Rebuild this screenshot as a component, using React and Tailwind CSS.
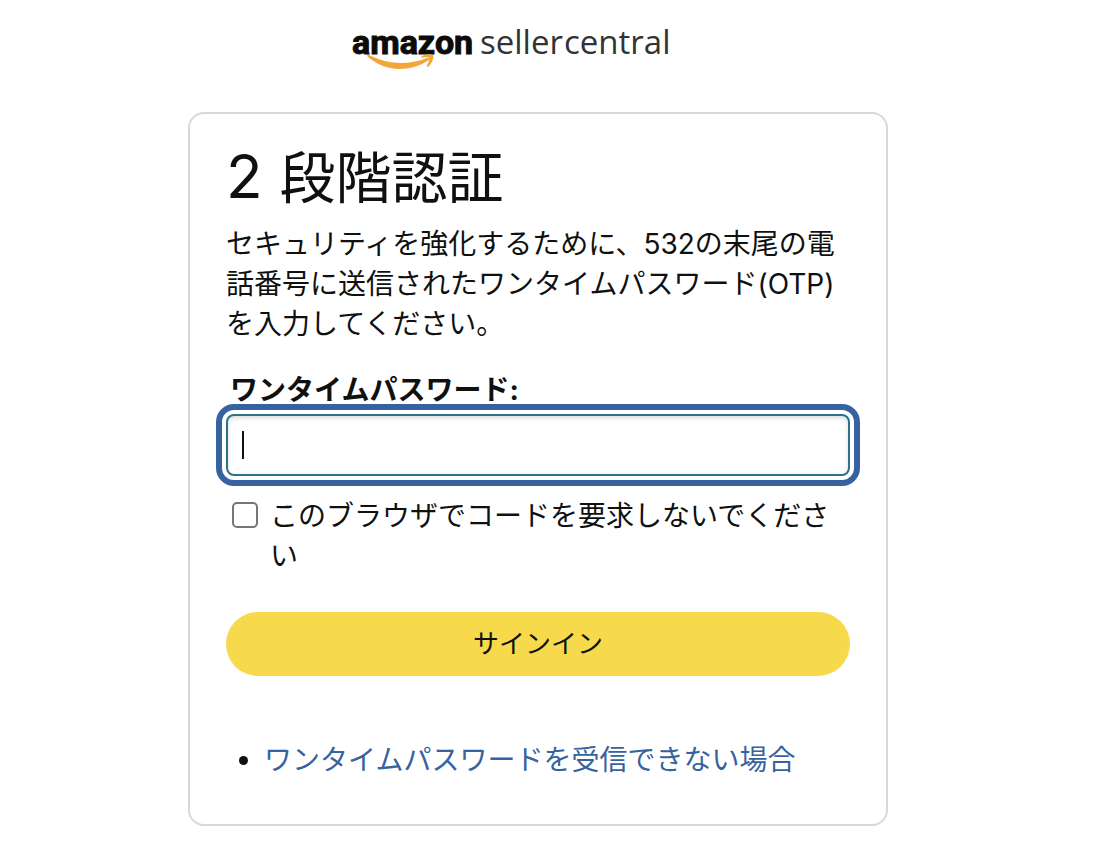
import { useState } from "react";

function Logo() {
  return (
    <svg className="overflow-visible" width="320" height="48" viewBox="0 0 320 48" role="img" aria-label="amazon seller central">
      <text
        x="1"
        y="30"
        fontSize="34"
        fontWeight="700"
        fill="#0b0b0b"
        stroke="#0b0b0b"
        strokeWidth="1"
        fontFamily="Roboto, sans-serif"
      >
        amazon
      </text>
      <text x="129" y="30" fontSize="33" fill="#333" fontFamily="'Open Sans', sans-serif">
        seller
      </text>
      <text x="213" y="30" fontSize="33" fill="#333" fontFamily="'Open Sans', sans-serif">
        central
      </text>
      <path d="M16 31.500C17 30.800 18 31 20 32C38 41 58 41 76 34C78 33 79.500 34.500 78 36C69 42 59 45 48 45C36 45 25 40 16.500 32.500Z" fill="#f3a73b" />
      <path d="M70.500 32.500C74 30 80 29.500 82 31C83.500 33 81 39.500 77.500 42.500C76.500 43.300 75.500 42.800 76 41.500C77.500 38.500 79 35 78.300 34C77.500 33 74 33.300 71.500 33.700C70.300 33.800 70 33 70.500 32.500Z" fill="#f3a73b" />
    </svg>
  );
}

export default function App() {
  const [code, setCode] = useState("");

  return (
    <main className="min-h-screen bg-white pr-[34px] pb-8 font-[Inter,'Noto_Sans_CJK_JP',sans-serif] text-[28px] leading-10 text-[#0f1111]">
      <div className="mx-auto w-full max-w-[700px] pt-6">
        <header className="flex justify-center pr-[54px]">
          <Logo />
        </header>
        <form
          className="mt-10 rounded-2xl border-2 border-[#d5d9d9] px-9 pt-[26px] pb-11"
          onSubmit={(event) => event.preventDefault()}
        >
          <h1 className="text-[56px] leading-[72px]">
            <span className="text-[60px]">2 </span>段階認証
          </h1>
          <p className="mt-2.5">
            セキュリティを強化するために、532の末尾の電話番号に送信されたワンタイムパスワード(OTP)を入力してください。
          </p>

          <label htmlFor="otp" className="mt-[26px] block pl-1 font-bold">
            ワンタイムパスワード:
          </label>
          <div className="relative mt-1">
            <input
              id="otp"
              type="text"
              inputMode="numeric"
              autoComplete="one-time-code"
              value={code}
              onChange={(event) => setCode(event.target.value)}
              className="block h-[62px] w-full rounded-lg border-2 border-[#2e7286] px-3.5 shadow-[inset_0_2px_4px_rgba(15,17,17,0.15)] outline-6 outline-offset-4 outline-[#3662a0]"
            />
            {code === "" && (
              <span aria-hidden="true" className="pointer-events-none absolute top-[17px] left-4 h-7 w-0.5 bg-[#0f1111]" />
            )}
          </div>

          <div className="mt-5 flex items-start gap-3 pl-1.5">
            <input
              id="remember"
              type="checkbox"
              className="mt-1.5 size-[26px] shrink-0 appearance-none rounded-[5px] border-2 border-[#767676] bg-white checked:bg-[#3662a0]"
            />
            <label htmlFor="remember">このブラウザでコードを要求しないでください</label>
          </div>

          <button type="submit" className="mt-9 block h-16 w-full rounded-full bg-[#f7d94c] text-[26px]">
            サインイン
          </button>

          <ul className="mt-16 list-disc pl-[38px]">
            <li>
              <a href="#help" className="text-[#3662a0]">
                ワンタイムパスワードを受信できない場合
              </a>
            </li>
          </ul>
        </form>
      </div>
    </main>
  );
}
